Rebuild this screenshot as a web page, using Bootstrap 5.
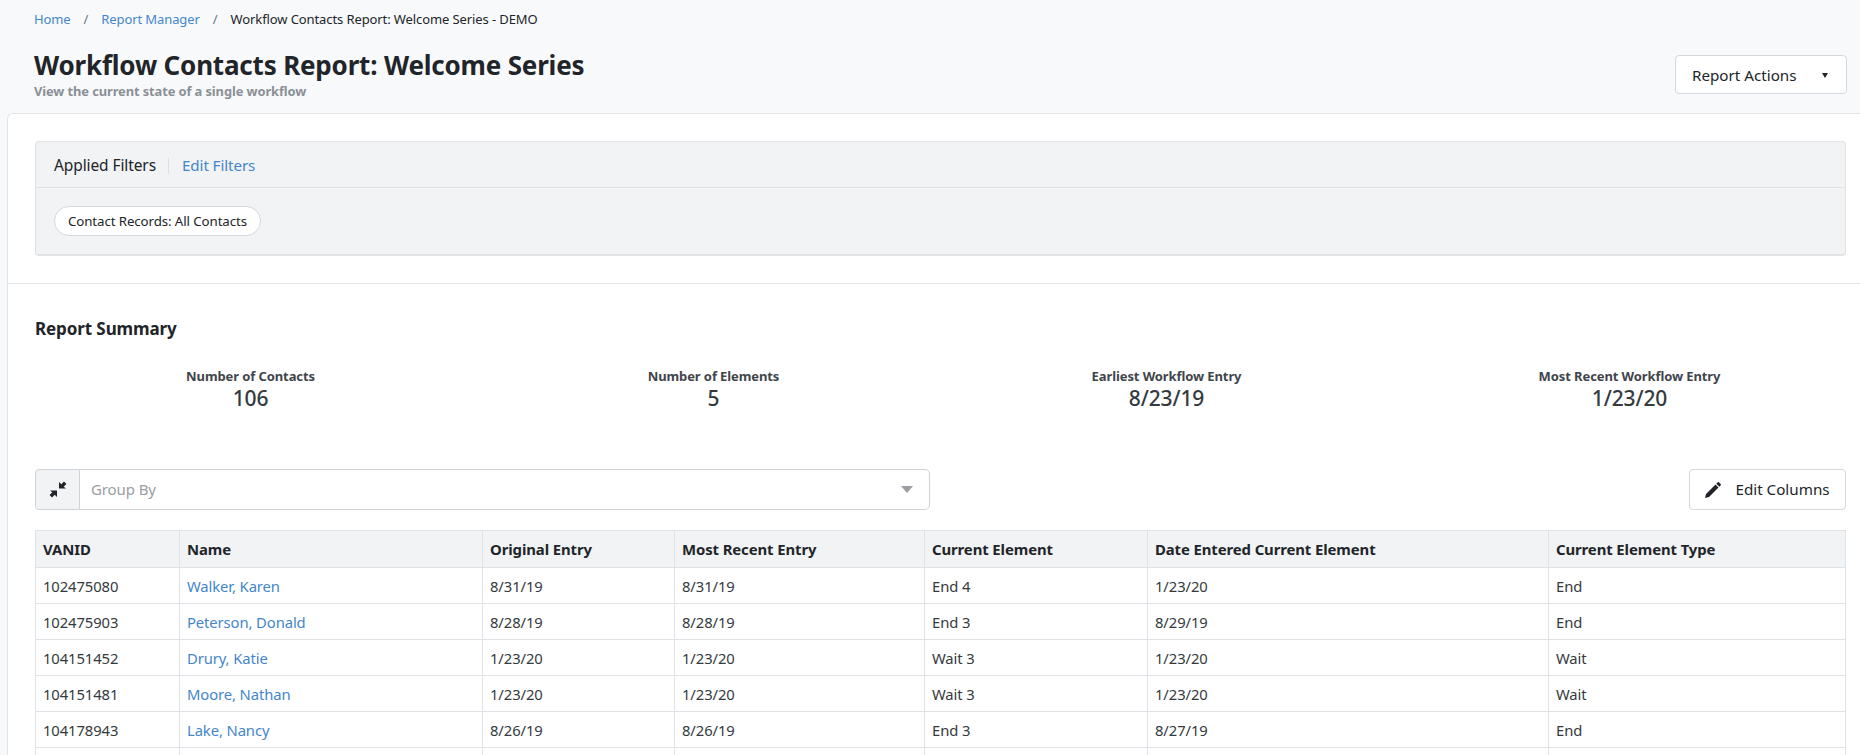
<!DOCTYPE html>
<html lang="en">
<head>
    <meta charset="UTF-8" />
    <title>Workflow Contacts Report</title>
    <link href="https://cdn.jsdelivr.net/npm/bootstrap@5.3.2/dist/css/bootstrap.min.css" rel="stylesheet" />
    <style>
        html, body { height: 100%; overflow: hidden; }
        body { background: #f8f9fb; color: #212529; font-family: "Noto Sans", "Open Sans", sans-serif; font-size: 14px; letter-spacing: -.1px; }
        a { color: #4486cb; text-decoration: none; }

        .crumbs { padding: 10px 34px 0; height: 40px; font-size: 13px; margin: 0; --bs-breadcrumb-divider-color: #6c757d; --bs-breadcrumb-item-padding-x: 13px; --bs-breadcrumb-margin-bottom: 0; line-height: 18px; }
        .page-head { padding: 0 13px 0 34px; height: 73px; }
        .page-title { font-size: 26px; font-weight: 700; line-height: 32px; margin: 9px 0 0; letter-spacing: -.18px; }
        .page-sub { font-size: 12.9px; font-weight: 700; color: #8b9096; line-height: 16px; margin-top: 2px; }
        .btn-plain { --bs-btn-bg: #fff; --bs-btn-border-color: #d5d8dc; --bs-btn-color: #212529; --bs-btn-font-size: 15.200px; --bs-btn-border-radius: 4px; }
        .actions-btn { width: 172px; height: 39px; margin-top: 15px; padding: 2px 20px 0 16px; }
        .tri { width: 0; height: 0; border-left: 3px solid transparent; border-right: 3px solid transparent; border-top: 5px solid #212529; margin-right: -2px; }

        .main-panel { background: #fff; border-top: 1px solid #e2e4e8; border-left: 1px solid #e2e4e8; border-top-left-radius: 6px; margin-left: 7px; height: 700px; }
        .filter-wrap { padding: 27px 14px 27px 27px; border-bottom: 1px solid #e2e4e8; }
        .filter-box { background: #f2f3f5; border: 1px solid #e0e2e6; border-bottom-width: 2px; border-radius: 4px; }
        .filter-top { height: 46px; padding: 2px 18px 0; border-bottom: 1px solid #e0e2e6; font-size: 15.500px; }
        .filter-top a { font-size: 15.200px; }
        .filter-sep { width: 1px; height: 16px; background: #dcdfe3; margin: 0 13px 0 12px; }
        .filter-bottom { height: 66px; padding: 18px; }
        .chip { background: #fff; border: 1px solid #d5d8dc; border-radius: 15px; height: 30px; font-size: 13.300px; padding: 0 13px; line-height: 29px; }

        .summary { padding: 0 14px 0 27px; }
        .summary-title { font-size: 17px; font-weight: 700; margin: 34px 0 0; line-height: 22px; }
        .stats { display: grid; grid-template-columns: 473px 453px 453px 473px; margin: 28px -25px 0 -21px; text-align: center; }
        .stat-label { font-size: 13px; font-weight: 700; color: #3f454b; line-height: 17px; }
        .stat-value { font-size: 21px; font-weight: 500; line-height: 26px; color: #343a40; }

        .tools { margin-top: 58px; height: 41px; }
        .group-by { width: 895px; height: 41px; }
        .collapse-btn { width: 45px; background: #f2f3f5; border: 1px solid #cfd2d6; border-radius: 4px 0 0 4px; padding: 0; }
        .group-select { flex: 1; border: 1px solid #cfd2d6; border-left: 0; border-radius: 0 5px 5px 0; padding: 0 10px 0 11px; color: #9a9da1; font-size: 15px; }
        .select-arrow { width: 0; height: 0; border-left: 6px solid transparent; border-right: 6px solid transparent; border-top: 7px solid #9a9da1; margin-right: 6px; }
        .columns-btn { width: 157px; height: 41px; padding: 0; gap: 14px; }

        .report-table { width: 1811px; margin: 20px 0 0; table-layout: fixed; --bs-table-border-color: #dfe2e6; font-size: 14.800px; }
        .report-table th { background: #f2f3f5; font-weight: 700; height: 37px; padding: 0 7px; vertical-align: middle; font-size: 14.900px; }
        .report-table td { height: 36px; padding: 2px 7px 0; vertical-align: middle; color: #343a40; }
    </style>
</head>
<body>
<nav aria-label="breadcrumb">
    <ol class="breadcrumb crumbs">
        <li class="breadcrumb-item"><a href="#">Home</a></li>
        <li class="breadcrumb-item"><a href="#">Report Manager</a></li>
        <li class="breadcrumb-item active text-dark">Workflow Contacts Report: Welcome Series - DEMO</li>
    </ol>
</nav>
<div class="page-head d-flex justify-content-between">
    <div>
        <h1 class="page-title">Workflow Contacts Report: Welcome Series</h1>
        <div class="page-sub">View the current state of a single workflow</div>
    </div>
    <button class="btn btn-plain actions-btn d-flex align-items-center justify-content-between" type="button">
        Report Actions <span class="tri"></span>
    </button>
</div>

<div class="main-panel">
    <div class="filter-wrap">
        <div class="filter-box">
            <div class="filter-top d-flex align-items-center">
                <span>Applied Filters</span><span class="filter-sep"></span><a href="#">Edit Filters</a>
            </div>
            <div class="filter-bottom">
                <span class="chip d-inline-block">Contact Records: All Contacts</span>
            </div>
        </div>
    </div>

    <div class="summary">
        <h2 class="summary-title">Report Summary</h2>
        <div class="stats">
            <div><div class="stat-label">Number of Contacts</div><div class="stat-value">106</div></div>
            <div><div class="stat-label">Number of Elements</div><div class="stat-value">5</div></div>
            <div><div class="stat-label">Earliest Workflow Entry</div><div class="stat-value">8/23/19</div></div>
            <div><div class="stat-label">Most Recent Workflow Entry</div><div class="stat-value">1/23/20</div></div>
        </div>

        <div class="tools d-flex justify-content-between">
            <div class="group-by d-flex">
                <button class="collapse-btn d-flex align-items-center justify-content-center" type="button" aria-label="Collapse">
                    <svg width="18" height="17" viewBox="0 0 18 17" fill="#212529"><path d="M10 7.500V1l2.300 2.300L15 .6 17.400 3l-2.700 2.700L17 7.500zM8 9.500V16l-2.300-2.300L3 16.400.6 14l2.700-2.700L1 9.500z"/></svg>
                </button>
                <div class="group-select d-flex align-items-center justify-content-between">
                    <span>Group By</span><span class="select-arrow"></span>
                </div>
            </div>
            <button class="btn btn-plain columns-btn d-flex align-items-center justify-content-center" type="button">
                <svg width="16" height="16" viewBox="0 0 16 16" fill="#212529"><path d="M0 16l1-4 9.500-9.500 3 3L4 15zM11.300 1.700L12.800.2a.7.7 0 0 1 1 0l2 2a.7.7 0 0 1 0 1l-1.500 1.500z"/></svg>
                Edit Columns
            </button>
        </div>

        <table class="table table-bordered report-table">
            <colgroup>
                <col style="width:144px"><col style="width:303px"><col style="width:192px"><col style="width:250px"><col style="width:223px"><col style="width:401px"><col>
            </colgroup>
            <thead>
                <tr><th>VANID</th><th>Name</th><th>Original Entry</th><th>Most Recent Entry</th><th>Current Element</th><th>Date Entered Current Element</th><th>Current Element Type</th></tr>
            </thead>
            <tbody>
                <tr><td>102475080</td><td><a href="#">Walker, Karen</a></td><td>8/31/19</td><td>8/31/19</td><td>End 4</td><td>1/23/20</td><td>End</td></tr>
                <tr><td>102475903</td><td><a href="#">Peterson, Donald</a></td><td>8/28/19</td><td>8/28/19</td><td>End 3</td><td>8/29/19</td><td>End</td></tr>
                <tr><td>104151452</td><td><a href="#">Drury, Katie</a></td><td>1/23/20</td><td>1/23/20</td><td>Wait 3</td><td>1/23/20</td><td>Wait</td></tr>
                <tr><td>104151481</td><td><a href="#">Moore, Nathan</a></td><td>1/23/20</td><td>1/23/20</td><td>Wait 3</td><td>1/23/20</td><td>Wait</td></tr>
                <tr><td>104178943</td><td><a href="#">Lake, Nancy</a></td><td>8/26/19</td><td>8/26/19</td><td>End 3</td><td>8/27/19</td><td>End</td></tr>
                <tr><td></td><td></td><td></td><td></td><td></td><td></td><td></td></tr>
            </tbody>
        </table>
    </div>
</div>
<script src="https://cdn.jsdelivr.net/npm/bootstrap@5.3.2/dist/js/bootstrap.bundle.min.js"></script>
</body>
</html>
